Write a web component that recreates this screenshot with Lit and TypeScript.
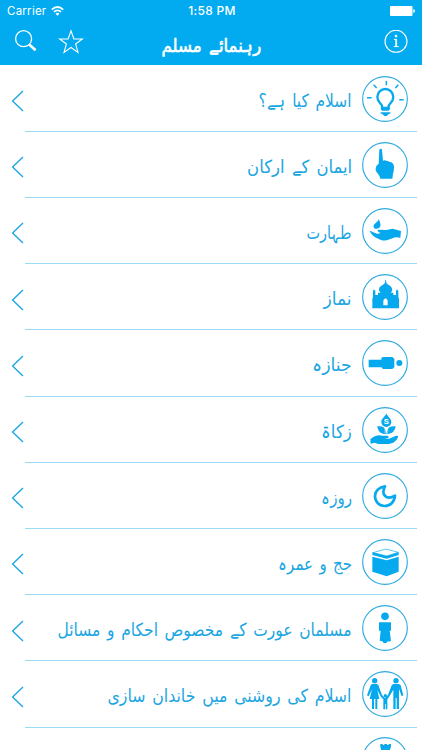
import { LitElement, html, css, svg, type SVGTemplateResult } from "lit";
import { customElement, property } from "lit/decorators.js";

interface Topic {
  label: string;
  icon: SVGTemplateResult;
  width: number;
}

// Icons share a viewBox centred on the ring: -69 -69 138 138.
const bulb = svg`
  <path class="s6" d="M-9 27V20C-10 15-23 9-23-6A24 24 0 0 1 25-6C25 9 12 15 11 20V27Z"/>
  <path d="M-12 26H14V31L11 35H-9L-12 31ZM-13 40H16V44H12L5 51H-2L-9 44H-13Z"/>
  <path class="s4" d="M4-54V-41M-34-43L-25-33M40-43L31-33M-54-4H-40M43 2H56"/>`;
const finger = svg`
  <path d="M-17-45Q-16-49-13-49Q-9-49-9-45L-6-13Q0-16 5-12Q10-13 14-9Q21-10 24-4Q28 0 27 9Q27 17 24 26L22 41H-14L-17 32L-26 20Q-29 15-28 11L-26 3L-19-4Z"/>`;
const wash = svg`
  <path d="M-18-36C-16-26-12-23-14-14C-17-5-31-4-34-11C-37-22-22-25-18-36Z"/>
  <path d="M-46 1Q-43-1-39 2L-24 8L-13 7L-22 1Q-24-3-18-4L4-3L23-7L48 0L46 20Q29 16 23 22L5 28Q-5 30-14 26L-30 19Q-39 14-46 1Z"/>`;
const mosque = svg`
  <path fill-rule="evenodd" d="M1-52H3L4-43C7-36 21-34 22-23Q22-16 17-13H25V-6H33V-18L36-23L40-18V0L42 5V34H-38V5L-36 0V-18L-33-23L-29-18V-6H-21V-13H-13Q-19-17-18-24C-17-34-3-36 0-43ZM-5 25H8V11Q7 6 2 4Q-4 6-5 11Z"/>`;
const body = svg`
  <path d="M-49-10H-11V-15L-6-18H22L28-13V13L22 18H-6L-11 13H-49Z"/><circle cx="43" cy="0" r="9"/>`;
const zakat = svg`
  <path d="M4-50C7-39 19-36 19-24A15 15 0 0 1-11-24C-11-36 1-39 4-50Z"/>
  <path d="M-23-11C-8-13 1-8 2 4L4 14L6 4C8-8 17-13 32-11C30 2 22 12 8 12H-1C-14 11-21 4-23-11Z"/>
  <path class="w" d="M0-5V11M8-5V11"/>
  <path d="M-44 27L-31 19Q-18 13-9 17H8Q13 20 10 24L-2 26L12 26L31 18Q38 15 40 20Q36 31 25 38L12 42H-21L-31 38L-43 41Z"/>
  <text x="4" y="-17" class="coin">S</text>`;
const moon = svg`
  <path class="s7" d="M0-29C-13-5 4 15 30-1C29 18 15 30-1 30C-18 30-30 17-30 1C-30-15-18-27 0-29Z"/>`;
const kaaba = svg`
  <path class="s2" d="M-36-28L3-39L40-29L5-18Z"/>
  <path d="M-38-29L5-18L41-29V-21L5-10L-38-21ZM-38-16L5-5L41-16V29L5 43L-38 29Z"/>`;
const woman = svg`
  <circle cx="0" cy="-35" r="11.5"/>
  <path d="M-18-17H18V8H14L18 38L12 41L9 39L4 45H-4L-8 40L-16 38L-13 8H-18Z"/>`;
const family = svg`
  <circle cx="-31" cy="-40" r="8"/><circle cx="33" cy="-40" r="8"/><circle cx="1" cy="5" r="5"/>
  <path d="M-39-30H-24L-20-27L-9 3L0 12L9 3L20-26L25-30H42L47-26L55 4L50 7L42-15V45H35V12H32V45H25V-13L12 9L7 16V46H2V30H0V46H-5V16L-12 9L-23-12L-17 15H-23V45H-29V15H-33V45H-39V15H-46L-39-14L-49 7L-54 4L-43-26Z"/>`;
const tower = svg`
  <path d="M-14-48H-7V-45H-2V-48H6V-45H11V-48H18V-39L15-33V-12L20 20H-16L-12-12V-33L-14-39Z"/>`;

const topics: Topic[] = [
  { label: "اسلام کیا ہے؟", icon: bulb, width: 93 },
  { label: "ایمان کے ارکان", icon: finger, width: 105 },
  { label: "طہارت", icon: wash, width: 45 },
  { label: "نماز", icon: mosque, width: 28 },
  { label: "جنازہ", icon: body, width: 40 },
  { label: "زکاۃ", icon: zakat, width: 31 },
  { label: "روزہ", icon: moon, width: 31 },
  { label: "حج و عمرہ", icon: kaaba, width: 74 },
  { label: "مسلمان عورت کے مخصوص احکام و مسائل", icon: woman, width: 294 },
  { label: "اسلام کی روشنی میں خاندان سازی", icon: family, width: 244 },
  { label: "", icon: tower, width: 0 },
];

/** One line of text, scaled horizontally to the width it is given. */
@customElement("fit-text")
export class FitText extends LitElement {
  @property({ type: Number }) width = 0;
  @property() text = "";

  static styles = css`
    :host { display: block; direction: rtl; white-space: nowrap; word-spacing: 2px; }
    span { display: inline-block; transform-origin: 100% 50%; }
  `;

  updated() {
    const span = this.renderRoot.querySelector("span")!;
    if (this.width && span.offsetWidth) {
      span.style.transform = "none";
      const natural = span.getBoundingClientRect().width;
      span.style.transform = `scaleX(${this.width / natural})`;
    }
  }

  render() {
    return html`<span>${this.text}</span>`;
  }
}

@customElement("topic-row")
export class TopicRow extends LitElement {
  @property({ attribute: false }) topic!: Topic;

  static styles = css`
    :host {
      display: flex; align-items: flex-start; box-sizing: border-box;
      height: 66.2px; padding: 10.4px 14.3px 0 11px; position: relative;
    }
    :host::after {
      content: ""; position: absolute; left: 25px; right: 5px; bottom: -0.5px;
      height: 1px; background: #9adaf5;
    }
    .chevron { width: 13px; height: 22px; margin-top: 14.5px; fill: none; stroke: #1da7e2; stroke-width: 1.4; }
    fit-text {
      flex: 1; width: 0; margin: 12px 10px 0 0;
      font: 18px/26px "DejaVu Sans", sans-serif; color: #1ba6e2;
    }
    .icon { width: 46px; height: 46px; fill: #07a9ee; }
    .ring { fill: none; stroke: #2eaae0; stroke-width: 3.4; }
    .s2, .s4, .s6, .s7 { fill: none; stroke: #07a9ee; }
    .s2 { stroke-width: 2; }
    .s4 { stroke-width: 4.5; }
    .s6 { stroke-width: 7; }
    .s7 { stroke-width: 8; stroke-linejoin: round; }
    .w { fill: none; stroke: #fff; stroke-width: 1.5; }
    .coin { font: bold 23px "Liberation Sans", sans-serif; fill: #fff; text-anchor: middle; }
  `;

  render() {
    const { label, icon, width } = this.topic;
    return html`
      <svg class="chevron" viewBox="0 0 13 22"><path d="M12 1L1.6 11L12 21" /></svg>
      <fit-text .text=${label} .width=${width}></fit-text>
      <svg class="icon" viewBox="-69 -69 138 138">
        <circle class="ring" r="67" />${icon}
      </svg>`;
  }
}

@customElement("app-root")
export class AppRoot extends LitElement {
  static styles = css`
    :host {
      display: block; width: 422px; height: 750px; overflow: hidden; background: #fff;
      font-family: "Liberation Sans", sans-serif; color: #fff;
    }
    header { height: 65.2px; background: #02abf0; overflow: hidden; }
    .status {
      display: grid; grid-template-columns: 1fr auto 1fr; align-items: center;
      height: 22px; padding: 0 7px 0 7px; font: 11.5px/22px Inter, sans-serif;
    }
    .carrier { display: flex; align-items: center; gap: 5px; letter-spacing: 0.25px; }
    .wifi { width: 13px; height: 10px; fill: none; stroke: #fff; stroke-width: 1.7; }
    .time { font-weight: 500; font-size: 12px; letter-spacing: 0.3px; padding-left: 2px; }
    .battery { width: 25px; height: 10px; justify-self: end; fill: #fff; }
    nav { display: flex; align-items: center; height: 40px; padding: 0 14px; fill: none; stroke: #fff; }
    .search { width: 24px; height: 24px; }
    .star { width: 26px; height: 26px; margin-left: 20px; }
    .title {
      width: 100px; margin: 8px 0 0 77px; font: 18px/26px "DejaVu Sans", sans-serif;
      -webkit-text-stroke: 0.6px #fff;
    }
    .info { width: 24px; height: 24px; margin-left: auto; }
  `;

  render() {
    return html`
      <header>
        <div class="status">
          <span class="carrier">Carrier
            <svg class="wifi" viewBox="0 0 13 10">
              <path d="M.8 3.6Q6.5-1.6 12.2 3.6M2.9 5.9Q6.5 2.7 10.1 5.9" />
              <path d="M4.5 7.7Q6.5 6 8.5 7.7L6.5 9.7Z" fill="#fff" stroke="none" />
            </svg>
          </span>
          <span class="time">1:58 PM</span>
          <svg class="battery" viewBox="0 0 25 10">
            <rect width="22.5" height="10" rx="1" /><path d="M23.3 3Q25 3.5 25 5T23.3 7Z" />
          </svg>
        </div>
        <nav>
          <svg class="search" viewBox="0 0 24 24">
            <circle cx="9.6" cy="8.7" r="8" stroke-width="1.3" />
            <path d="M15.2 14.5L21.6 20.3" stroke-width="2.6" />
          </svg>
          <svg class="star" viewBox="0 0 26 26">
            <path stroke-width="1.1" d="M13 1.8L15.9 10H24.3L17.6 15L20 23.4L13 18.5L6 23.4L8.4 15L1.7 10H10.1Z" />
          </svg>
          <fit-text class="title" .text=${"رہنمائے مسلم"} .width=${100}></fit-text>
          <svg class="info" viewBox="0 0 24 24">
            <circle cx="12" cy="11.3" r="11" stroke-width="1.1" />
            <path stroke-width="1.8" d="M12.2 9.3V16.3" />
            <path stroke-width="1" d="M10 9.4H12.5M9.8 16.6H14.8" />
            <circle cx="12" cy="6.1" r="1.3" fill="#fff" stroke="none" />
          </svg>
        </nav>
      </header>
      <main>${topics.map((t) => html`<topic-row .topic=${t}></topic-row>`)}</main>`;
  }
}
